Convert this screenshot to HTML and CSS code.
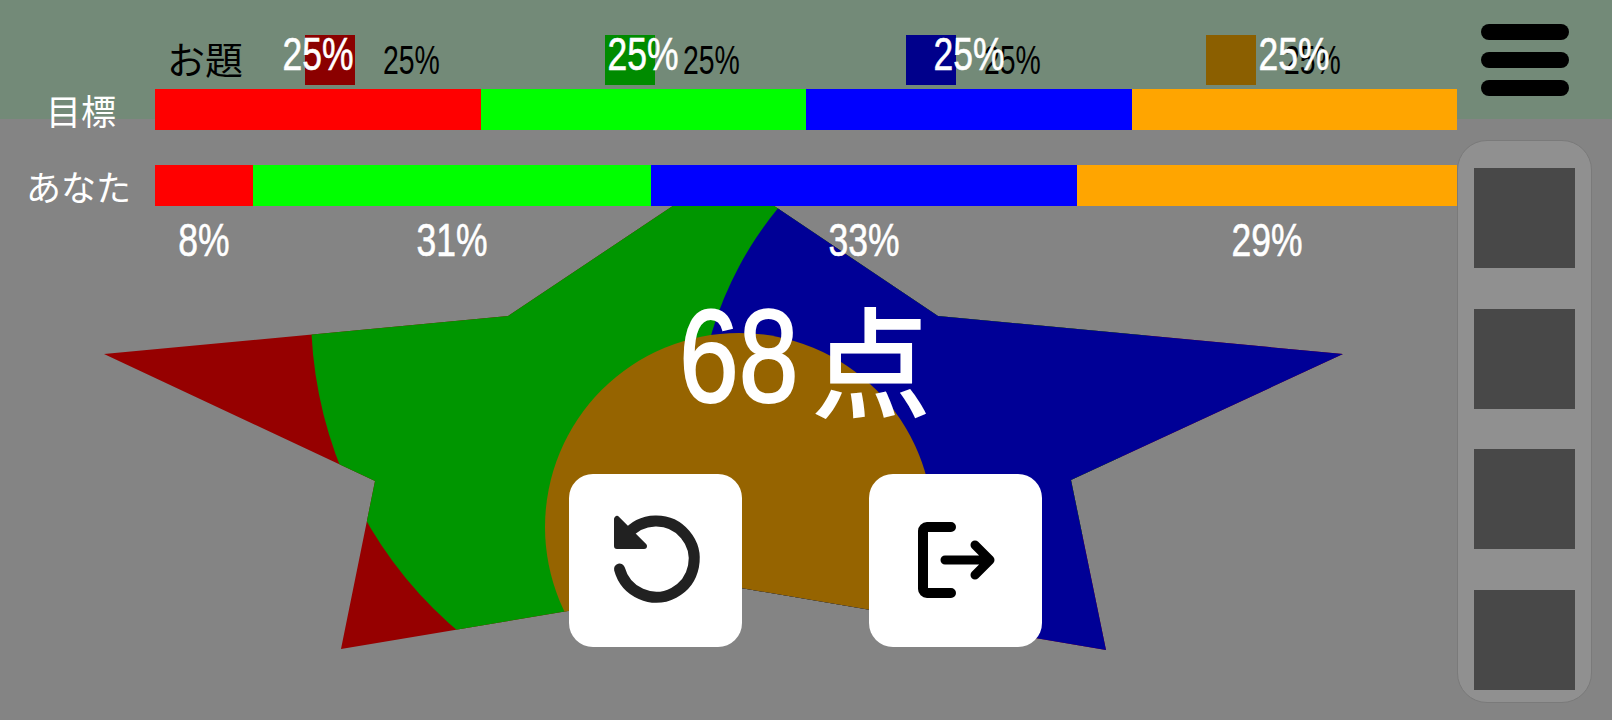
FILE: index.html
```html
<!DOCTYPE html>
<html lang="ja">
<head>
<meta charset="utf-8">
<title>結果</title>
<link rel="stylesheet" href="styles.css">
</head>
<body>
<div class="app">
  <div class="band"></div>
  <svg class="star" viewBox="0 0 1612 720" aria-hidden="true">
    <defs>
      <clipPath id="star-clip">
        <polygon points="723.5,172 938,316 1343,354 1071,480 1106,650 723.5,585 341,649 375,481 104,354 508,316"/>
      </clipPath>
    </defs>
    <g clip-path="url(#star-clip)">
      <rect class="s-red" x="0" y="0" width="1612" height="720"/>
      <circle class="s-green" cx="729" cy="313" r="418"/>
      <circle class="s-blue" cx="1052" cy="434" r="355"/>
      <circle class="s-orange" cx="739" cy="527" r="194"/>
    </g>
  </svg>

  <div class="result">
    <div class="score"><span class="score-num">68</span><span class="score-unit">点</span></div>
    <div class="actions">
      <button class="action" type="button" aria-label="もう一度">
        <svg viewBox="0 0 173 173">
          <path class="retry-ring" d="M57 62A38 38 0 1 1 50.5 95"/>
          <path class="retry-head" d="M48 45V72H75Z"/>
        </svg>
      </button>
      <button class="action" type="button" aria-label="終了">
        <svg viewBox="0 0 173 173">
          <path class="exit-line" d="M82 53H58a4 4 0 0 0-4 4V115a4 4 0 0 0 4 4H82"/>
          <path class="exit-line thin" d="M76 86H120M106 71L121 86L106 101"/>
        </svg>
      </button>
    </div>
  </div>

  <main class="main">
    <div class="legend">
      <span class="legend-title">お題</span>
      <div class="legend-item"><span class="swatch c-red"></span><span class="legend-pct">25%</span></div>
      <div class="legend-item"><span class="swatch c-green"></span><span class="legend-pct">25%</span></div>
      <div class="legend-item"><span class="swatch c-blue"></span><span class="legend-pct">25%</span></div>
      <div class="legend-item"><span class="swatch c-orange"></span><span class="legend-pct">25%</span></div>
    </div>

    <div class="row">
      <div class="row-label label-goal">目標</div>
      <div class="bar-wrap">
        <div class="bar-top-values">
          <span class="value"><span class="squeeze">25%</span></span>
          <span class="value"><span class="squeeze">25%</span></span>
          <span class="value"><span class="squeeze">25%</span></span>
          <span class="value"><span class="squeeze">25%</span></span>
        </div>
        <div class="bar">
          <span class="seg b-red" style="flex-basis:25%"></span>
          <span class="seg b-green" style="flex-basis:25%"></span>
          <span class="seg b-blue" style="flex-basis:25%"></span>
          <span class="seg b-orange" style="flex-basis:25%"></span>
        </div>
      </div>
    </div>

    <div class="row row-you">
      <div class="row-label label-you">あなた</div>
      <div class="bar-wrap">
        <div class="bar">
          <span class="seg b-red" style="flex-basis:7.5%"></span>
          <span class="seg b-green" style="flex-basis:30.6%"></span>
          <span class="seg b-blue" style="flex-basis:32.7%"></span>
          <span class="seg b-orange" style="flex-basis:29.2%"></span>
        </div>
        <div class="bar-values">
          <span class="value" style="flex-basis:7.5%"><span class="squeeze">8%</span></span>
          <span class="value" style="flex-basis:30.6%"><span class="squeeze">31%</span></span>
          <span class="value" style="flex-basis:32.7%"><span class="squeeze">33%</span></span>
          <span class="value" style="flex-basis:29.2%"><span class="squeeze">29%</span></span>
        </div>
      </div>
    </div>
  </main>

  <aside class="side">
    <button class="menu" type="button" aria-label="メニュー">
      <span></span><span></span><span></span>
    </button>
    <div class="tray">
      <div class="slot"></div>
      <div class="slot"></div>
      <div class="slot"></div>
      <div class="slot"></div>
    </div>
  </aside>
</div>
</body>
</html>
```
FILE: styles.css
```css
* { box-sizing: border-box; }
html, body { margin: 0; padding: 0; }
body {
  width: 1612px;
  height: 720px;
  overflow: hidden;
  background: #848484;
  font-family: "Noto Sans CJK JP", "Liberation Sans", sans-serif;
}
.app {
  position: relative;
  width: 1612px;
  height: 720px;
  overflow: hidden;
  display: flex;
  align-items: flex-start;
}
.band {
  position: absolute;
  left: 0;
  top: 0;
  width: 100%;
  height: 119px;
  background: #738a78;
}
.star {
  position: absolute;
  left: 0;
  top: 0;
  width: 1612px;
  height: 720px;
}
.s-red { fill: #960000; }
.s-green { fill: #009600; }
.s-blue { fill: #000096; }
.s-orange { fill: #966400; }

.main {
  position: relative;
  width: 1457px;
  padding-top: 35px;
  display: flex;
  flex-direction: column;
}
.legend {
  display: flex;
  height: 50px;
  margin-bottom: 4px;
  padding-left: 167px;
}
.legend-title {
  width: 138px;
  flex: none;
  font-size: 38px;
  line-height: 50px;
  font-weight: 400;
  color: #000;
  margin-top: -2px;
}
.legend-item {
  flex: none;
  width: 300.4px;
  display: flex;
  align-items: center;
}
.swatch { width: 50px; height: 50px; flex: none; }
.c-red { background: #8b0000; }
.c-green { background: #008b00; }
.c-blue { background: #00008b; }
.c-orange { background: #8b5f00; }
.legend-pct {
  margin-left: 28px;
  font-family: "Liberation Sans", sans-serif;
  font-size: 40px;
  line-height: 40px;
  color: #000;
  transform: scaleX(.71);
  transform-origin: left center;
}

.row { display: flex; height: 41px; }
.row-you { margin-top: 35px; }
.row-label {
  width: 155px;
  flex: none;
  color: #fff;
  text-align: right;
  line-height: 41px;
  white-space: nowrap;
}
.label-goal { font-size: 35px; padding-right: 39px; }
.label-you { font-size: 35px; padding-right: 24px; }

.bar-wrap { position: relative; flex: 1; min-width: 0; }
.bar { display: flex; height: 41px; }
.seg { display: block; flex: 0 0 auto; }
.b-red { background: #ff0000; }
.b-green { background: #00ff00; }
.b-blue { background: #0000ff; }
.b-orange { background: #ffa500; }

.bar-top-values {
  position: absolute;
  left: 0;
  right: 0;
  top: -57px;
  display: flex;
}
.bar-top-values .value { flex: 0 0 25%; }
.bar-values { display: flex; margin-top: 12px; }
.value {
  display: block;
  flex: 0 0 auto;
  text-align: center;
  color: #fff;
  font-family: "Liberation Sans", sans-serif;
  font-size: 47px;
  line-height: 44px;
  -webkit-text-stroke: .6px #fff;
}
.squeeze {
  display: inline-block;
  transform: scaleX(.755);
}

.result {
  position: absolute;
  left: 0;
  top: 252px;
  width: 1610px;
  display: flex;
  flex-direction: column;
  align-items: center;
}
.score {
  display: flex;
  align-items: center;
  height: 222px;
  padding-bottom: 12px;
  color: #fff;
  line-height: 1;
}
.score-num {
  display: block;
  width: 118px;
  font-family: "Liberation Sans", sans-serif;
  font-size: 131px;
  line-height: 130px;
  white-space: nowrap;
  transform: scaleX(.82);
  transform-origin: left center;
  margin-right: 14px;
  -webkit-text-stroke: 2px #fff;
}
.score-unit {
  display: block;
  font-size: 120px;
  line-height: 130px;
  font-weight: 500;
}
.actions { display: flex; gap: 127px; }
.action {
  display: block;
  width: 173px;
  height: 173px;
  padding: 0;
  border: 0;
  border-radius: 24px;
  background: #fff;
}
.action svg { display: block; width: 173px; height: 173px; }
.retry-ring { fill: none; stroke: #212121; stroke-width: 11; stroke-linecap: round; }
.retry-head { fill: #212121; stroke: #212121; stroke-width: 6; stroke-linejoin: round; }
.exit-line { fill: none; stroke: #000; stroke-width: 10; stroke-linecap: round; stroke-linejoin: round; }
.exit-line.thin { stroke-width: 9; }

.side {
  position: relative;
  width: 135px;
  flex: none;
  display: flex;
  flex-direction: column;
  align-items: center;
  padding-top: 24px;
}
.menu {
  display: flex;
  flex-direction: column;
  gap: 12px;
  width: 88px;
  padding: 0;
  border: 0;
  background: none;
  margin-bottom: 44px;
}
.menu span {
  display: block;
  width: 88px;
  height: 16px;
  border-radius: 8px;
  background: #000;
}
.tray {
  width: 135px;
  height: 563px;
  padding: 27px 16px 12px;
  display: flex;
  flex-direction: column;
  justify-content: space-between;
  align-items: center;
  border: 1px solid #7a7a7a;
  border-radius: 30px;
  background: #909090;
}
.slot { width: 101px; height: 100px; background: #484848; }
```
